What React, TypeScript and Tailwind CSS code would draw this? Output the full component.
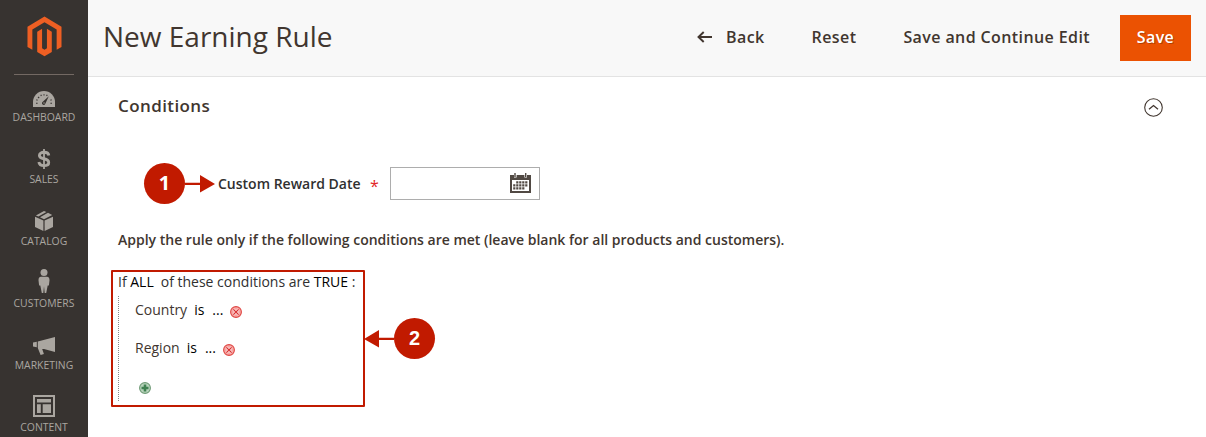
import React from 'react';

const DashboardIcon = () => (
  <svg width="22" height="16" viewBox="0 0 22 16">
    <path d="M0 16V11a11 11 0 0 1 22 0v5z" fill="#aaa6a0" />
    <path
      d="M3 12.2h1.6M3.3 8.8l1.3.5M5 6l1.2 1M7.8 3.8l.6 1.3M11 3.2v1.3M14.2 3.8l-.6 1.3M18.7 8.8l-1.3.5M19 12.2h-1.6"
      stroke="#373330"
      strokeWidth="1.1"
    />
    <path d="M15.8 5.2l-6 5.6a1.7 1.7 0 1 0 2.5 2z" fill="#373330" />
    <circle cx="11" cy="12" r="0.7" fill="#aaa6a0" />
  </svg>
);

const SalesIcon = () => (
  <svg width="14" height="20" viewBox="0 0 14 20" fill="none" stroke="#aaa6a0">
    <path d="M7 0v20" strokeWidth="1.8" />
    <path d="M11.8 6.5C11.5 4.3 9.7 3.3 7 3.3S2.4 4.4 2.4 6.4c0 4.7 9.3 2 9.3 7 0 2.1-1.9 3.2-4.7 3.2s-4.8-1.2-5.1-3.6" strokeWidth="2.9" />
  </svg>
);

const CatalogIcon = () => (
  <svg width="18" height="20" viewBox="0 0 18 20" fill="#aaa6a0">
    <path d="M0 5.8l8.4 3.7V20L0 16z" />
    <path d="M18 5.8L9.6 9.5V20l8.4-4z" />
    <path d="M9 0l2.4 1.1-8 4.4L.9 4.4zM13 1.8L17.2 4 9 8.2 5 6.3z" />
  </svg>
);

const CustomersIcon = () => (
  <svg width="12" height="24" viewBox="0 0 12 24" fill="#aaa6a0">
    <circle cx="6" cy="3.5" r="3.5" />
    <path d="M3 7.8h6c1.8 0 2.5 1.5 2.5 3.4l-.6 5.2H9.7L8.2 24H6.7L6 17.3 5.3 24H3.8L2.3 16.4H1.1L.5 11.2C.5 9.3 1.2 7.8 3 7.8z" />
  </svg>
);

const MarketingIcon = () => (
  <svg width="22" height="18" viewBox="0 0 22 18" fill="#aaa6a0">
    <path d="M0 5.4l3.8-.7v5.6L0 9.6zM4.8 4.4L22 0v15L11 11.9H9.2l1.7 5.2-3.3.9-2.8-7.1z" />
  </svg>
);

const ContentIcon = () => (
  <svg width="22" height="22" viewBox="0 0 22 22">
    <path d="M1 1h20v20H1z" fill="none" stroke="#aaa6a0" strokeWidth="2" />
    <path d="M4 4h14v3.5H4zM4 9.3h3.8V18H4zM9.7 9.3H18V18H9.7z" fill="#aaa6a0" />
  </svg>
);

const menu = [
  { label: 'DASHBOARD', icon: <DashboardIcon /> },
  { label: 'SALES', icon: <SalesIcon /> },
  { label: 'CATALOG', icon: <CatalogIcon /> },
  { label: 'CUSTOMERS', icon: <CustomersIcon /> },
  { label: 'MARKETING', icon: <MarketingIcon /> },
  { label: 'CONTENT', icon: <ContentIcon /> },
];

const RemoveIcon = () => (
  <svg className="mt-[3px]" width="12" height="12" viewBox="0 0 12 12">
    <circle cx="6" cy="6" r="5.4" fill="#f7a5a2" stroke="#df4744" strokeWidth="1.1" />
    <path d="M3.5 3.5l5 5M8.5 3.5l-5 5" stroke="#fde3e2" strokeWidth="2.6" />
    <path d="M3.4 3.4l5.2 5.2M8.6 3.4L3.4 8.6" stroke="#d92f2f" strokeWidth="1.3" />
  </svg>
);

const AddIcon = () => (
  <svg width="12" height="12" viewBox="0 0 12 12">
    <circle cx="6" cy="6" r="5.4" fill="#b9d4bc" stroke="#6f9a76" strokeWidth="1.1" />
    <path d="M6 2.5v7M2.5 6h7" stroke="#3f8050" strokeWidth="2.6" />
  </svg>
);

const CalendarIcon = () => (
  <svg width="21" height="20" viewBox="0 0 21 20">
    <path d="M0 2h21v18H0z" fill="#514943" />
    <path d="M2 7h17v11H2z" fill="#fff" />
    <path d="M4 0h2.6v4.5H4zM14.4 0H17v4.5h-2.6z" fill="#fff" />
    <path d="M5 0v4M15.7 0v4" stroke="#514943" strokeWidth="1.4" />
    <path d="M6.2 9.4h12M3.2 12.4h15M3.2 15.4h12" stroke="#514943" strokeWidth="2.1" strokeDasharray="2.2 .8" />
  </svg>
);

const App: React.FC = () => {
  return (
    <div className="relative flex h-[437px] w-[1206px] overflow-hidden bg-white font-['Open_Sans',sans-serif] text-sm text-[#41362f]">
      {/* Sidebar */}
      <aside className="flex w-[88px] shrink-0 flex-col items-center bg-[#373330]">
        <div className="flex h-[74px] shrink-0 items-start pt-4 pl-px">
          <svg width="35" height="41" viewBox="0 0 36 41" preserveAspectRatio="none" fill="#ee5f23">
            <path d="M18 .5l17.5 10.2v20.2l-5 2.9V13.6L18 6.3 5.5 13.6v20.2l-5-2.9V10.7z" />
            <path d="M15.5 12.8v19.5l2.5 1.5 2.5-1.5V12.8l5 2.9v20.2L18 40.3l-7.5-4.4V15.7z" />
          </svg>
        </div>
        <div className="h-px w-[60px] shrink-0 bg-[#736963]" />
        <nav className="w-full shrink-0">
          {menu.map((item) => (
            <div key={item.label} className="flex h-[62px] flex-col items-center pt-2">
              <div className="flex h-6 items-end justify-center">{item.icon}</div>
              <span className="mt-1 text-[10.4px] leading-3 text-[#aaa6a0]">{item.label}</span>
            </div>
          ))}
        </nav>
      </aside>

      <div className="flex flex-1 flex-col">
        {/* Page header */}
        <header className="flex h-[77px] items-start border-b border-[#e3e3e3] bg-[#f8f8f8] pr-[15px] pl-[15px]">
          <h1 className="pt-[17px] text-[28px] leading-[38px] whitespace-nowrap">New Earning Rule</h1>
          <div className="mt-[15px] ml-auto flex h-[46px] items-center text-base font-semibold tracking-[.4px] whitespace-nowrap">
            <div className="mr-[30px] flex h-[44px] items-center self-start">
              <svg className="mr-[14px]" width="15" height="12" viewBox="0 0 15 12" fill="none" stroke="#41362f" strokeWidth="1.9">
                <path d="M1.5 6H15M6.7 1L1.5 6l5.2 5" />
              </svg>
              <span>Back</span>
              <span className="ml-[47px]">Reset</span>
              <span className="ml-[47px]">Save and Continue Edit</span>
            </div>
            <button className="h-[46px] w-[71px] bg-[#eb5202] pb-[2px] font-semibold tracking-[.4px] text-white [text-shadow:1px_1px_0_rgba(0,0,0,.25)]">
              Save
            </button>
          </div>
        </header>

        {/* Conditions fieldset */}
        <main className="flex flex-1 flex-col pl-[30px]">
          <div className="flex h-[58px] items-center justify-between pr-[43px]">
            <h2 className="text-[17px] font-semibold tracking-[.4px]">Conditions</h2>
            <svg className="mt-[3px]" width="19" height="19" viewBox="0 0 19 19" fill="none" stroke="#41362f">
              <circle cx="9.5" cy="9.5" r="8.8" strokeWidth="1.1" />
              <path d="M5 11.2l4.5-3.7 4.5 3.7" strokeWidth="1.3" />
            </svg>
          </div>

          <div className="mt-8 flex h-[33px] items-center pl-[100px]">
            <label className="w-[142px] font-semibold text-[#303030] whitespace-nowrap">Custom Reward Date</label>
            <span className="mt-1 ml-[10px] w-5 text-base leading-5 text-[#e22626]">*</span>
            <div className="flex h-[33px] w-[150px] items-center justify-end border border-[#adadad] pr-2 pb-px">
              <CalendarIcon />
            </div>
          </div>

          <p className="mt-[30px] leading-5 font-semibold">
            Apply the rule only if the following conditions are met (leave blank for all products and customers).
          </p>

          <div className="mt-[22px] flex h-5 items-center text-[#303030]">
            <span className="whitespace-pre">If </span>
            <span className="text-black">ALL</span>
            <span className="ml-[7px] whitespace-pre">of these conditions are </span>
            <span className="text-black">TRUE</span>
            <span className="whitespace-pre"> :</span>
          </div>
          <div className="mt-1 flex h-[105px] flex-col border-l border-dotted border-[#888] pl-4">
            <div className="mt-1 flex h-5 items-center">
              <span>Country</span>
              <span className="ml-[7px] text-black">is</span>
              <span className="mr-[7px] ml-2 text-black">...</span>
              <RemoveIcon />
            </div>
            <div className="mt-[18px] flex h-5 items-center">
              <span>Region</span>
              <span className="ml-[7px] text-black">is</span>
              <span className="mr-[7px] ml-2 text-black">...</span>
              <RemoveIcon />
            </div>
            <div className="mt-6 pl-1">
              <AddIcon />
            </div>
          </div>
        </main>
      </div>

      {/* Numbered callouts over the form */}
      <div className="absolute top-[163px] left-[144px] flex items-center">
        <div className="flex size-[41px] items-center justify-center rounded-full bg-[#c11a00] text-[20px] font-bold text-white">1</div>
        <svg width="30" height="18" viewBox="0 0 30 18" fill="#c11a00">
          <path d="M0 7.7h15V0l15 9-15 8.6V10H0z" />
        </svg>
      </div>
      <div className="absolute top-[270px] left-[111px] h-[137px] w-[254px] rounded-[1px] border-2 border-[#c11a00]" />
      <div className="absolute top-[318px] left-[364px] flex items-center">
        <svg width="30" height="18" viewBox="0 0 30 18" fill="#c11a00">
          <path d="M30 7.7H15V0L0 9l15 8.6V10h15z" />
        </svg>
        <div className="flex size-[41px] items-center justify-center rounded-full bg-[#c11a00] font-['Liberation_Sans',sans-serif] text-[20px] font-bold text-white">2</div>
      </div>
    </div>
  );
};

export default App;
